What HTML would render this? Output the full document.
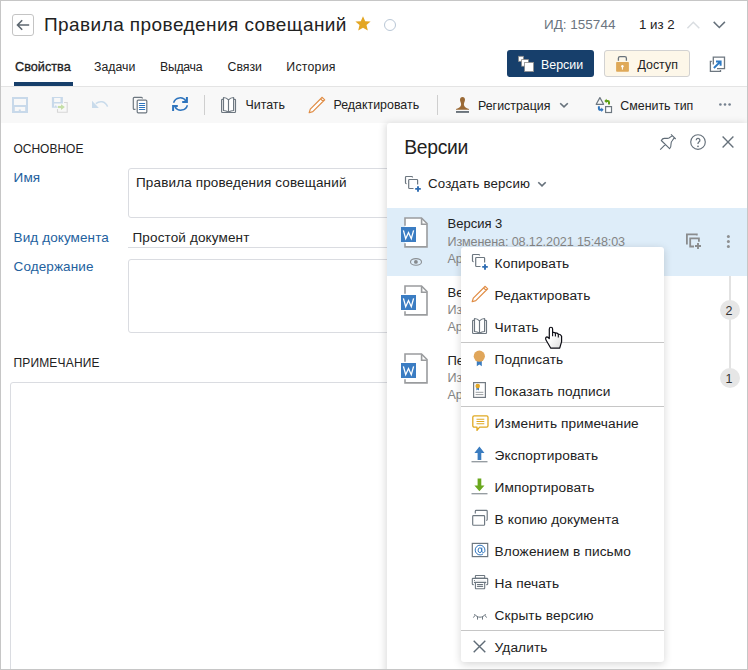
<!DOCTYPE html>
<html><head><meta charset="utf-8">
<style>
*{box-sizing:border-box;margin:0;padding:0}
html,body{width:748px;height:670px;overflow:hidden;background:#fff}
body{font-family:"Liberation Sans",sans-serif;font-size:13px;color:#222;position:relative}
.a{position:absolute;white-space:nowrap;line-height:1}
#frame{position:absolute;left:0;top:0;width:748px;height:670px;border:1px solid #c6c6c6;pointer-events:none;z-index:100}
svg{position:absolute;overflow:visible}
.tb{font-size:12.4px;color:#222}
.tab{font-size:12.3px;color:#222}
.fm{font-size:13.5px;letter-spacing:0.14px}
.lb{font-size:13.5px;letter-spacing:0.1px;color:#23619e}
.mi{font-size:13.7px;letter-spacing:0.1px;color:#222}
.g{color:#858585;font-size:12.6px;letter-spacing:-0.12px}
</style></head><body>
<div id="frame"></div>

<!-- header -->
<div class="a" style="left:12px;top:14px;width:22px;height:22px;border:1px solid #c4c4c4;border-radius:3px"></div>
<svg style="left:12px;top:14px" width="22" height="22" viewBox="0 0 22 22"><path d="M17.2 11H5.5M10.2 6.3L5.5 11L10.2 15.7" fill="none" stroke="#5d6770" stroke-width="1.6"/></svg>
<div class="a" style="left:44px;top:15px;font-size:19px;letter-spacing:0.43px;color:#222">Правила проведения совещаний</div>
<svg style="left:355px;top:16px" width="16" height="15" viewBox="0 0 16 15"><path d="M8 0.3L10.2 5.2L15.6 5.6L11.5 9.1L12.8 14.6L8 11.7L3.2 14.6L4.5 9.1L0.4 5.6L5.8 5.2Z" fill="#e3a623"/></svg>
<div class="a" style="left:384px;top:19px;width:12px;height:12px;border:1.3px solid #b9c7d6;border-radius:50%"></div>
<div class="a" style="left:544px;top:17.8px;font-size:13.5px;color:#6b7580">ИД: 155744</div>
<div class="a" style="left:639px;top:18px;font-size:13.3px;color:#222">1 из 2</div>
<svg style="left:686.5px;top:20.5px" width="13" height="8" viewBox="0 0 13 8"><path d="M0.4 7.3L6.3 1.2L12.3 7.3" fill="none" stroke="#d9dde1" stroke-width="1.5"/></svg>
<svg style="left:713px;top:21px" width="13" height="8" viewBox="0 0 13 8"><path d="M0.7 0.9L6.3 6.5L11.9 0.9" fill="none" stroke="#66717b" stroke-width="1.5"/></svg>

<!-- tabs -->
<div class="a tab" style="left:15px;top:60.8px;font-size:12.7px;-webkit-text-stroke:0.3px #222">Свойства</div>
<div class="a tab" style="left:94px;top:60.5px">Задачи</div>
<div class="a tab" style="left:160px;top:60.5px;letter-spacing:-0.3px">Выдача</div>
<div class="a tab" style="left:227.5px;top:60.5px">Связи</div>
<div class="a tab" style="left:286.3px;top:60.5px;letter-spacing:0.25px">История</div>
<div class="a" style="left:14px;top:82px;width:59px;height:4px;background:#173f6b"></div>

<!-- buttons -->
<div class="a" style="left:507px;top:50px;width:87px;height:27px;background:#173f6b;border-radius:3px"></div>
<svg style="left:507px;top:50px" width="30" height="27" viewBox="0 0 30 27">
 <rect x="11.5" y="6.3" width="5" height="5" fill="#fff" stroke="#8a8a8a" stroke-width="0.8"/>
 <rect x="14.6" y="9.6" width="6.8" height="6.6" fill="#fff" stroke="#8a8a8a" stroke-width="0.8"/>
 <rect x="17.6" y="12.4" width="9" height="9.2" fill="#fff" stroke="#8a8a8a" stroke-width="0.8"/>
</svg>
<div class="a tb" style="left:541px;top:58.5px;color:#fff">Версии</div>
<div class="a" style="left:604px;top:50px;width:86px;height:27px;background:#fdf7e9;border:1px solid #d2d2d2;border-radius:3px"></div>
<svg style="left:610px;top:52px" width="24" height="24" viewBox="0 0 24 24">
 <path d="M8.4 8.8V6.2A1.6 1.6 0 0 1 10 4.6H14.8A1.6 1.6 0 0 1 16.4 6.2V8.8" fill="none" stroke="#6a737b" stroke-width="1.3"/>
 <rect x="6.1" y="9.9" width="12.8" height="9.8" rx="0.8" fill="#dfa958"/>
 <circle cx="12.4" cy="14.3" r="1.2" fill="#fff"/><rect x="11.9" y="14.3" width="1" height="3.3" fill="#fff"/>
</svg>
<div class="a tb" style="left:637.5px;top:58.5px">Доступ</div>
<svg style="left:704px;top:50.5px" width="28" height="26" viewBox="0 0 28 26">
 <path d="M9.3 13.6V6.2H20.5V17.6H13" fill="none" stroke="#6d7780" stroke-width="1.3"/>
 <path d="M7.8 10.3H6.4V20.3H16.5V19" fill="none" stroke="#6d7780" stroke-width="1.3"/>
 <path d="M9.9 17L16.6 10.4M12 10.4H16.6V14.8" fill="none" stroke="#2e7bc4" stroke-width="2"/>
</svg>

<!-- toolbar -->
<div class="a" style="left:1px;top:86px;width:746px;height:36.5px;background:#f8f8f8;border-top:1px solid #e4e4e4"></div>
<!-- save -->
<svg style="left:12px;top:97px" width="16" height="16" viewBox="0 0 16 16">
 <path fill="#c8d9ea" fill-rule="evenodd" d="M0 0H16V16H0ZM2 2V8H14V2ZM2.8 10V14H6.8V12.5H8.8V14H13.2V10Z"/>
</svg>
<!-- save as -->
<svg style="left:48px;top:94px" width="24" height="22" viewBox="0 0 24 22">
 <path fill="#c8d9ea" fill-rule="evenodd" d="M3.9 3H14.9V9.5H12.5V4.1H6.1V7.9H12.5V9.5H6.1V12.4H7V11.4H8.4V12.4H9.6V13.8H3.9Z"/>
 <path d="M9.5 15V18.2H19.2V8.5H16" fill="none" stroke="#d6d6d6" stroke-width="1.1"/>
 <path d="M10 13H14" stroke="#c5dfa8" stroke-width="2.2"/><path d="M13 10.2L16.9 13L13 15.9Z" fill="#c5dfa8"/>
</svg>
<!-- undo -->
<svg style="left:86px;top:94px" width="28" height="22" viewBox="0 0 28 22">
 <path d="M9.8 9.6C13.5 6.6 19 6.8 21.6 12.6" fill="none" stroke="#c9dbeb" stroke-width="1.4"/>
 <path d="M6 6.8V13.9H12.9Z" fill="#c9dbeb"/>
</svg>
<!-- copy -->
<svg style="left:128px;top:94px" width="24" height="22" viewBox="0 0 24 22">
 <path d="M14.4 4.4V4.3A1 1 0 0 0 13.4 3.3H6.3A1 1 0 0 0 5.3 4.3V14.4A1 1 0 0 0 6.3 15.4H7.5" fill="none" stroke="#6d7780" stroke-width="1.2"/>
 <rect x="9.2" y="6.1" width="9.6" height="12.7" rx="1" fill="#fff" stroke="#6d7780" stroke-width="1.2"/>
 <path d="M11.4 9.5H16.7M11.4 11.5H16.7M11.4 13.5H16.7M11.4 15.5H16.7" stroke="#2e74bd" stroke-width="1.1" stroke-linecap="round"/>
</svg>
<!-- refresh -->
<svg style="left:166px;top:92px" width="28" height="24" viewBox="0 0 28 24">
 <path d="M7.6 10.8A6.8 6.8 0 0 1 20 9.2M21.4 13.2A6.8 6.8 0 0 1 9 14.8" fill="none" stroke="#2e74bd" stroke-width="1.5"/>
 <path d="M16.2 9.9H20.9V5.1 M11.8 14.1H7.1V18.9" fill="none" stroke="#2e74bd" stroke-width="2"/>
</svg>
<div class="a" style="left:204px;top:95px;width:1px;height:20px;background:#cfcfcf"></div>
<!-- book -->
<svg style="left:216px;top:94px" width="24" height="22" viewBox="0 0 24 22">
 <path d="M7.3 5.3H6.4A0.8 0.8 0 0 0 5.6 6.1V17.7A0.8 0.8 0 0 0 6.4 18.5H18.7A0.8 0.8 0 0 0 19.5 17.7V6.1A0.8 0.8 0 0 0 18.7 5.3H17.8" fill="none" stroke="#6d7780" stroke-width="1.15"/>
 <path d="M12.5 5.9C11 4.2 9.2 3.5 7.5 3.5V16.5C9.2 16.5 11 17 12.5 18.2C14 17 15.8 16.5 17.6 16.5V3.5C15.8 3.5 14 4.2 12.5 5.9V18.2" fill="#fff" stroke="#6d7780" stroke-width="1.15" stroke-linejoin="round"/>
</svg>
<div class="a tb" style="left:245.5px;top:99px">Читать</div>
<!-- pencil -->
<svg style="left:304px;top:94px" width="24" height="22" viewBox="0 0 24 22">
 <path d="M5.2 18.7L6.3 15.1L18.2 3.3L20.7 5.8L8.8 17.6Z M16.6 4.9L19.1 7.4" fill="#fff" stroke="#e08d45" stroke-width="1.2" stroke-linejoin="round"/>
</svg>
<div class="a tb" style="left:333.5px;top:99px">Редактировать</div>
<div class="a" style="left:437px;top:95px;width:1px;height:20px;background:#cfcfcf"></div>
<!-- stamp -->
<svg style="left:450px;top:94px" width="24" height="22" viewBox="0 0 24 22">
 <path d="M12.5 3C14.1 3 15 4.1 15 5.8C15 7.6 13.9 8.6 13.9 10.6C13.9 13 16 14.3 19 14.9V15.7H6V14.9C9 14.3 11.1 13 11.1 10.6C11.1 8.6 10 7.6 10 5.8C10 4.1 10.9 3 12.5 3Z" fill="#9b6a36"/>
 <rect x="6" y="17" width="13" height="1.9" fill="#6a737b"/>
</svg>
<div class="a tb" style="left:478px;top:99.5px">Регистрация</div>
<svg style="left:554px;top:96px" width="20" height="18" viewBox="0 0 20 18"><path d="M6.2 7.2L10 10.9L13.8 7.2" fill="none" stroke="#66717b" stroke-width="1.6"/></svg>
<!-- change type -->
<svg style="left:592px;top:94px" width="24" height="22" viewBox="0 0 24 22">
 <path d="M7.9 3.6L11.6 10.3H4.2Z" fill="none" stroke="#6d7780" stroke-width="1.2" stroke-linejoin="round"/>
 <rect x="13.6" y="12.6" width="5.9" height="5.9" fill="#fff" stroke="#6d7780" stroke-width="1.2"/>
 <path d="M17 10.6V8.2A1.2 1.2 0 0 0 15.8 7H14" fill="none" stroke="#5fa015" stroke-width="2"/><path d="M12.3 7L14.6 4.8V9.2Z" fill="#5fa015"/>
 <path d="M6.9 12.2V14.6A1.2 1.2 0 0 0 8.1 15.8H9.9" fill="none" stroke="#2e74bd" stroke-width="2"/><path d="M11.6 15.8L9.3 13.6V18Z" fill="#2e74bd"/>
</svg>
<div class="a tb" style="left:620.3px;top:99.5px">Сменить тип</div>
<svg style="left:719px;top:103px" width="13" height="3" viewBox="0 0 13 3"><circle cx="1.4" cy="1.5" r="1.3" fill="#74808e"/><circle cx="6" cy="1.5" r="1.3" fill="#74808e"/><circle cx="10.6" cy="1.5" r="1.3" fill="#74808e"/></svg>

<!-- form -->
<div class="a" style="left:13.4px;top:143.2px;font-size:12px;color:#222">ОСНОВНОЕ</div>
<div class="a lb" style="left:13.6px;top:170.6px">Имя</div>
<div class="a" style="left:128px;top:168px;width:320px;height:49.5px;border:1px solid #dadce1;border-radius:3px"></div>
<div class="a fm" style="left:136px;top:175.8px">Правила проведения совещаний</div>
<div class="a lb" style="left:13.6px;top:230.8px">Вид документа</div>
<div class="a fm" style="left:132.5px;top:230.6px">Простой документ</div>
<div class="a" style="left:128px;top:246.5px;width:320px;height:1px;background:#dadce1"></div>
<div class="a lb" style="left:13.6px;top:260.2px">Содержание</div>
<div class="a" style="left:128px;top:258.5px;width:320px;height:74px;border:1px solid #dadce1;border-radius:3px"></div>
<div class="a" style="left:13.4px;top:357px;font-size:12px;letter-spacing:0.18px;color:#222">ПРИМЕЧАНИЕ</div>
<div class="a" style="left:10px;top:382px;width:420px;height:300px;border:1px solid #dadce1;border-radius:3px"></div>

<!-- panel -->
<div class="a" style="left:387px;top:123px;width:361px;height:560px;background:#fff;box-shadow:-2px 0 7px rgba(0,0,0,0.13);border-top-left-radius:3px"></div>
<div class="a" style="left:404.3px;top:137.8px;font-size:19.3px;letter-spacing:-0.3px;color:#222">Версии</div>
<!-- pin -->
<svg style="left:656px;top:130px" width="24" height="24" viewBox="0 0 24 24">
 <path d="M15 4.3L19.7 9 M16.4 5.6L13 8C12.5 8.3 12 8.4 11.5 8.4H8.3C7 8.4 6 9.3 5.3 10.5L13.6 18.7C14.7 17.6 15.1 15.6 15.1 13.4C15.1 12.4 15.5 11.6 16 11L18.4 7.6 M9.2 14.6L4.2 19.6" fill="none" stroke="#5f6b76" stroke-width="1.1" stroke-linejoin="round"/>
</svg>
<!-- help -->
<svg style="left:690px;top:134px" width="16" height="16" viewBox="0 0 16 16">
 <circle cx="8" cy="8" r="7.3" fill="none" stroke="#66717b" stroke-width="1.15"/>
 <path d="M6.2 6.2A1.85 1.85 0 1 1 8.9 7.9C8.3 8.3 8 8.7 8 9.6V10.1" fill="none" stroke="#66717b" stroke-width="1.25"/>
 <circle cx="8" cy="12.3" r="0.85" fill="#66717b"/>
</svg>
<!-- close -->
<svg style="left:722px;top:136px" width="12" height="12" viewBox="0 0 12 12"><path d="M0.6 0.6L11.4 11.4M11.4 0.6L0.6 11.4" stroke="#66717b" stroke-width="1.35"/></svg>
<!-- create version -->
<svg style="left:398.8px;top:171.8px" width="24" height="24" viewBox="0 0 24 24">
 <path d="M13.5 5.6V5.3A0.8 0.8 0 0 0 12.7 4.5H7.3A0.8 0.8 0 0 0 6.5 5.3V10.8A0.8 0.8 0 0 0 7.3 11.6H7.6" fill="none" stroke="#6d7780" stroke-width="1.2"/>
 <path d="M14.5 16.5H10.5A0.8 0.8 0 0 1 9.7 15.7V8.3A0.8 0.8 0 0 1 10.5 7.5H17.8A0.8 0.8 0 0 1 18.6 8.3V12.5" fill="none" stroke="#6d7780" stroke-width="1.2"/>
 <path d="M16.2 16.9H21.8M19 14.2V19.7" stroke="#2f6db3" stroke-width="1.9"/>
</svg>
<div class="a" style="left:428px;top:176.7px;font-size:13.3px;letter-spacing:0.15px">Создать версию</div>
<svg style="left:532px;top:174px" width="20" height="20" viewBox="0 0 20 20"><path d="M6.3 8.2L10 11.9L13.7 8.2" fill="none" stroke="#66717b" stroke-width="1.6"/></svg>

<!-- selected row -->
<div class="a" style="left:387px;top:208px;width:361px;height:67.5px;background:#deedf9"></div>

<!-- doc icons -->
<svg style="left:400px;top:217px" width="29" height="32" viewBox="0 0 29 32">
 <path d="M5 1H21.5L27 6.5V29.9H5Z" fill="#fff"/>
 <path d="M5 8.8V1H21.5L27 6.5V29.9H5V26.2" fill="none" stroke="#9a9c9e" stroke-width="1.6"/>
 <path d="M21.6 1.2V7.2H26.9" fill="none" stroke="#9a9c9e" stroke-width="1.6"/>
 <rect x="1" y="10" width="15" height="15" fill="#3b7dc3"/>
 <path d="M3.4 13.3L5.7 21.7L8.5 15.5L11.3 21.7L13.6 13.3" fill="none" stroke="#fff" stroke-width="1.3"/>
</svg>
<svg style="left:404px;top:252px" width="24" height="20" viewBox="0 0 24 20">
 <ellipse cx="12" cy="9.95" rx="5.5" ry="3.35" fill="none" stroke="#8a8e92" stroke-width="1.1"/>
 <circle cx="11.9" cy="9.95" r="1.9" fill="#85898d"/>
</svg>
<svg style="left:400px;top:285px" width="29" height="32" viewBox="0 0 29 32">
 <path d="M5 1H21.5L27 6.5V29.9H5Z" fill="#fff"/>
 <path d="M5 8.8V1H21.5L27 6.5V29.9H5V26.2" fill="none" stroke="#9a9c9e" stroke-width="1.6"/>
 <path d="M21.6 1.2V7.2H26.9" fill="none" stroke="#9a9c9e" stroke-width="1.6"/>
 <rect x="1" y="10" width="15" height="15" fill="#3b7dc3"/>
 <path d="M3.4 13.3L5.7 21.7L8.5 15.5L11.3 21.7L13.6 13.3" fill="none" stroke="#fff" stroke-width="1.3"/>
</svg>
<svg style="left:400px;top:353px" width="29" height="32" viewBox="0 0 29 32">
 <path d="M5 1H21.5L27 6.5V29.9H5Z" fill="#fff"/>
 <path d="M5 8.8V1H21.5L27 6.5V29.9H5V26.2" fill="none" stroke="#9a9c9e" stroke-width="1.6"/>
 <path d="M21.6 1.2V7.2H26.9" fill="none" stroke="#9a9c9e" stroke-width="1.6"/>
 <rect x="1" y="10" width="15" height="15" fill="#3b7dc3"/>
 <path d="M3.4 13.3L5.7 21.7L8.5 15.5L11.3 21.7L13.6 13.3" fill="none" stroke="#fff" stroke-width="1.3"/>
</svg>

<div class="a" style="left:447.5px;top:217.4px;font-size:13px;color:#222">Версия 3</div>
<div class="a g" style="left:447.5px;top:235.7px">Изменена: 08.12.2021 15:48:03</div>
<div class="a g" style="left:447.5px;top:252.5px">Архивная версия</div>
<div class="a" style="left:447.5px;top:285.5px;font-size:13px;color:#222">Версия 2</div>
<div class="a g" style="left:447.5px;top:303.5px">Изменена: 07.12.2021 11:20:15</div>
<div class="a g" style="left:447.5px;top:320.5px">Архивная версия</div>
<div class="a" style="left:447.5px;top:353.5px;font-size:13px;color:#222">Первая версия</div>
<div class="a g" style="left:447.5px;top:371.5px">Изменена: 06.12.2021 09:12:44</div>
<div class="a g" style="left:447.5px;top:388.5px">Архивная версия</div>

<!-- row actions -->
<svg style="left:680px;top:226px" width="30" height="30" viewBox="0 0 30 30">
 <path d="M16.8 9.4V8.4H6.9V18.4" fill="none" stroke="#8a8c8e" stroke-width="1.8"/>
 <path d="M14 20.5H10.2V12.3H18.9V15.8" fill="none" stroke="#8a8c8e" stroke-width="1.8"/>
 <path d="M15 20H21M18 17V23" stroke="#8a8c8e" stroke-width="1.9"/>
</svg>
<svg style="left:726px;top:234px" width="5" height="16" viewBox="0 0 5 16"><circle cx="2.4" cy="2.5" r="1.5" fill="#8e9092"/><circle cx="2.4" cy="7.5" r="1.5" fill="#8e9092"/><circle cx="2.4" cy="12.5" r="1.5" fill="#8e9092"/></svg>

<!-- timeline -->
<div class="a" style="left:728.7px;top:276px;width:2px;height:102px;background:#e2e2e2"></div>
<div class="a" style="left:719.7px;top:300px;width:20px;height:20px;border-radius:50%;background:#e6e6e6"></div>
<div class="a" style="left:725.5px;top:304.5px;font-size:12.5px;color:#333">2</div>
<div class="a" style="left:719.7px;top:368px;width:20px;height:20px;border-radius:50%;background:#e6e6e6"></div>
<div class="a" style="left:725.5px;top:372.5px;font-size:12.5px;color:#333">1</div>

<!-- context menu -->
<div class="a" style="left:461px;top:247px;width:203px;height:415px;background:#fff;border-radius:3px;box-shadow:0 2px 9px rgba(0,0,0,0.17)"></div>
<div class="a" style="left:461px;top:341.5px;width:203px;height:1px;background:#c6c6c6"></div>
<div class="a" style="left:461px;top:406px;width:203px;height:1px;background:#c6c6c6"></div>
<div class="a" style="left:461px;top:630px;width:203px;height:1px;background:#c6c6c6"></div>

<!-- menu icons -->
<svg style="left:466px;top:250px" width="24" height="24" viewBox="0 0 24 24">
 <path d="M13.5 5.6V5.3A0.8 0.8 0 0 0 12.7 4.5H7.3A0.8 0.8 0 0 0 6.5 5.3V10.8A0.8 0.8 0 0 0 7.3 11.6H7.6" fill="none" stroke="#6d7780" stroke-width="1.2"/>
 <path d="M14.5 16.5H10.5A0.8 0.8 0 0 1 9.7 15.7V8.3A0.8 0.8 0 0 1 10.5 7.5H17.8A0.8 0.8 0 0 1 18.6 8.3V12.5" fill="none" stroke="#6d7780" stroke-width="1.2"/>
 <path d="M16.2 16.9H21.8M19 14.2V19.7" stroke="#2f6db3" stroke-width="1.9"/>
</svg>
<svg style="left:467px;top:283px" width="24" height="22" viewBox="0 0 24 22">
 <path d="M5.2 18.7L6.3 15.1L18.2 3.3L20.7 5.8L8.8 17.6Z M16.6 4.9L19.1 7.4" fill="#fff" stroke="#e08d45" stroke-width="1.2" stroke-linejoin="round"/>
</svg>
<svg style="left:467px;top:315px" width="24" height="22" viewBox="0 0 24 22">
 <path d="M7.3 5.3H6.4A0.8 0.8 0 0 0 5.6 6.1V17.7A0.8 0.8 0 0 0 6.4 18.5H18.7A0.8 0.8 0 0 0 19.5 17.7V6.1A0.8 0.8 0 0 0 18.7 5.3H17.8" fill="none" stroke="#6d7780" stroke-width="1.15"/>
 <path d="M12.5 5.9C11 4.2 9.2 3.5 7.5 3.5V16.5C9.2 16.5 11 17 12.5 18.2C14 17 15.8 16.5 17.6 16.5V3.5C15.8 3.5 14 4.2 12.5 5.9V18.2" fill="#fff" stroke="#6d7780" stroke-width="1.15" stroke-linejoin="round"/>
</svg>
<svg style="left:472px;top:349.9px" width="15" height="17" viewBox="0 0 15 17">
 <path d="M4.8 9.8L4.8 16.3L7.3 14.4L9.8 16.3L9.8 9.8Z" fill="#3a7cc0"/>
 <circle cx="7.3" cy="6.2" r="5.6" fill="#e0a65a"/>
</svg>
<svg style="left:473px;top:382px" width="13" height="16" viewBox="0 0 13 16">
 <rect x="0.6" y="0.6" width="11.8" height="14.8" fill="#fff" stroke="#737b83" stroke-width="1.2"/>
 <path d="M3.4 5V8.6L4.7 7.6L6 8.6V5Z" fill="#3a7cc0"/>
 <circle cx="4.7" cy="4.1" r="2.3" fill="#e2a82a"/>
 <path d="M2.6 10.3H10.4M2.6 12.6H10.4" stroke="#9a9ea2" stroke-width="1"/>
</svg>
<svg style="left:471.5px;top:414.5px" width="17" height="17" viewBox="0 0 17 17">
 <path d="M2.2 0.8H14.6A1.4 1.4 0 0 1 16 2.2V10.8A1.4 1.4 0 0 1 14.6 12.2H7.6L5 15.4V12.2H2.2A1.4 1.4 0 0 1 0.8 10.8V2.2A1.4 1.4 0 0 1 2.2 0.8Z" fill="#fff" stroke="#e0a922" stroke-width="1.3" stroke-linejoin="round"/>
 <path d="M4.5 4.2H12.3M4.5 6.5H12.3M4.5 8.8H12.3" stroke="#e0a922" stroke-width="1.1"/>
</svg>
<svg style="left:471px;top:445.5px" width="17" height="17" viewBox="0 0 17 17">
 <path d="M3.4 7L8.4 0.5L13.5 7H10.3V14H6.6V7Z" fill="#3a7cc0"/>
 <rect x="0.5" y="15.2" width="16" height="1.1" fill="#7d858c"/>
</svg>
<svg style="left:471px;top:477.5px" width="17" height="17" viewBox="0 0 17 17">
 <path d="M6.6 0.5H10.3V7.6H13.5L8.4 13.2L3.4 7.6H6.6Z" fill="#6aa81e"/>
 <rect x="0.5" y="15.2" width="16" height="1.1" fill="#7d858c"/>
</svg>
<svg style="left:466px;top:504px" width="26" height="26" viewBox="0 0 26 26">
 <path d="M9.3 9.4V7.2A0.8 0.8 0 0 1 10.1 6.4H20.4A0.8 0.8 0 0 1 21.2 7.2V15.6A0.8 0.8 0 0 1 20.4 16.4H20.2" fill="none" stroke="#6d7780" stroke-width="1.15"/>
 <rect x="6.7" y="11.6" width="11.9" height="9.6" rx="0.8" fill="#fff" stroke="#6d7780" stroke-width="1.15"/>
</svg>
<svg style="left:468px;top:538px" width="24" height="24" viewBox="0 0 24 24">
 <rect x="4.3" y="5.4" width="15.4" height="13.2" fill="#fff" stroke="#6d7780" stroke-width="1.2"/>
 <path d="M15 15.9C14.2 16.6 13.2 16.9 12.1 16.9A4.85 4.85 0 1 1 16.9 12V12.8C16.9 13.9 16.2 14.6 15.4 14.6C14.5 14.6 13.8 13.9 13.8 12.9V9.6" fill="none" stroke="#2e74bd" stroke-width="1"/>
 <ellipse cx="11.9" cy="12.2" rx="1.8" ry="2.4" fill="none" stroke="#2e74bd" stroke-width="1"/>
</svg>
<svg style="left:468px;top:570px" width="24" height="24" viewBox="0 0 24 24">
 <rect x="7.4" y="5.5" width="9.3" height="2.9" rx="0.5" fill="none" stroke="#6d7780" stroke-width="1.1"/>
 <path d="M5.7 14.6H4.9A0.6 0.6 0 0 1 4.3 14V9A0.6 0.6 0 0 1 4.9 8.4H19.1A0.6 0.6 0 0 1 19.7 9V14A0.6 0.6 0 0 1 19.1 14.6H18.3" fill="none" stroke="#6d7780" stroke-width="1.1"/>
 <circle cx="6.5" cy="10.5" r="0.6" fill="#6d7780"/><path d="M8.3 10.5H17.7" stroke="#e4e6e8" stroke-width="0.4"/>
 <path d="M6.4 12.4H17.8" stroke="#6d7780" stroke-width="1.1" stroke-linecap="round"/>
 <path d="M7.4 12.4V18.1A0.6 0.6 0 0 0 8 18.7H16.1A0.6 0.6 0 0 0 16.7 18.1V12.4" fill="none" stroke="#6d7780" stroke-width="1.1"/>
 <path d="M9.4 14.6H14.7M9.4 16.5H14.7" stroke="#6d7780" stroke-width="1.1" stroke-linecap="round"/>
</svg>
<svg style="left:468px;top:604px" width="24" height="24" viewBox="0 0 24 24">
 <path d="M6.3 10C8 12.2 10 13.2 12 13.2C14 13.2 16 12.2 17.7 10 M7.1 11.2L5.4 13.6 M16.9 11.2L18.6 13.6 M9.5 12.8V15.6 M14.5 12.8V15.6" fill="none" stroke="#6d7780" stroke-width="1"/>
</svg>
<svg style="left:473px;top:640.4px" width="13" height="13" viewBox="0 0 13 13"><path d="M0.7 0.7L12.3 12.3M12.3 0.7L0.7 12.3" stroke="#5f6b76" stroke-width="1.4"/></svg>

<!-- menu text -->
<div class="a mi" style="left:494.6px;top:256.8px">Копировать</div>
<div class="a mi" style="left:494.6px;top:288.7px">Редактировать</div>
<div class="a mi" style="left:494.6px;top:320.6px">Читать</div>
<div class="a mi" style="left:494.6px;top:352.6px">Подписать</div>
<div class="a mi" style="left:494.6px;top:384.6px">Показать подписи</div>
<div class="a mi" style="left:494.6px;top:416.6px">Изменить примечание</div>
<div class="a mi" style="left:494.6px;top:448.6px">Экспортировать</div>
<div class="a mi" style="left:494.6px;top:480.6px">Импортировать</div>
<div class="a mi" style="left:494.6px;top:512.6px">В копию документа</div>
<div class="a mi" style="left:494.6px;top:544.6px">Вложением в письмо</div>
<div class="a mi" style="left:494.6px;top:576.6px">На печать</div>
<div class="a mi" style="left:494.6px;top:608.6px">Скрыть версию</div>
<div class="a mi" style="left:494.6px;top:640.6px">Удалить</div>

<!-- hand cursor -->
<svg style="left:540px;top:322px" width="26" height="30" viewBox="0 0 26 30">
 <defs><linearGradient id="hg" x1="0" y1="0" x2="1" y2="1"><stop offset="0.4" stop-color="#fff"/><stop offset="1" stop-color="#dcdcdc"/></linearGradient></defs>
 <path d="M9.3 16.6V6.9A1.65 1.65 0 0 1 12.6 6.9V10.4C13.6 10.2 14.6 10.3 15.4 10.9C16.4 10.9 17.6 11.3 18.3 12C19.6 12 21 12.7 21.6 14.2V19.6L19.7 26.2H10.8L6 18C5.3 16.8 5.6 14.9 6.9 14.8C7.8 14.8 8.6 15.6 9.3 16.6Z" fill="url(#hg)" stroke="#0c0c14" stroke-width="1.2" stroke-linejoin="round"/>
 <path d="M12.6 10.4V14.3M15.4 10.9V14.6M18.3 12V15.6" stroke="#0c0c14" stroke-width="1.1"/>
</svg>
</body></html>
